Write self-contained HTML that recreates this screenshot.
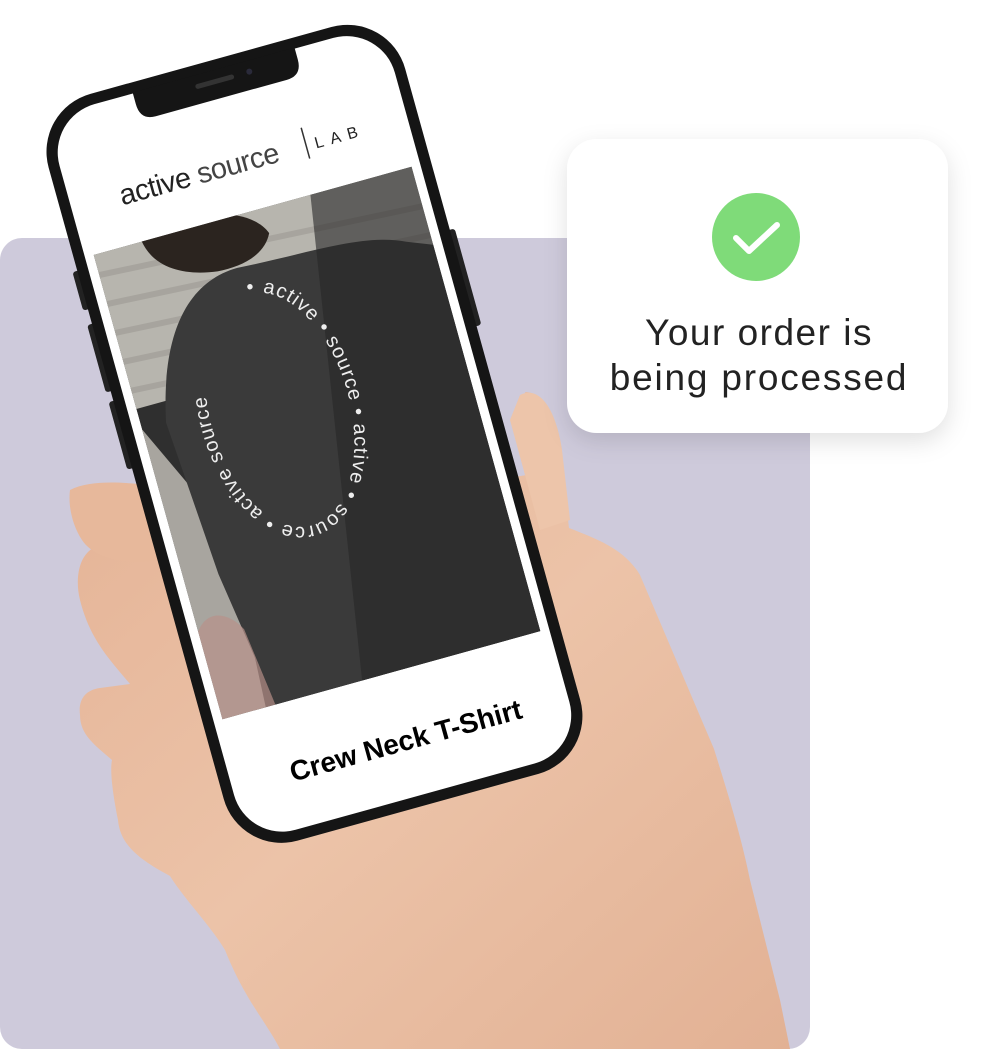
<!DOCTYPE html>
<html><head><meta charset="utf-8"><style>
html,body{margin:0;padding:0;background:#fff;width:991px;height:1049px;overflow:hidden}
svg{display:block}
</style></head><body>
<svg width="991" height="1049" viewBox="0 0 991 1049" xmlns="http://www.w3.org/2000/svg">
<defs>
<linearGradient id="skin" x1="0" y1="0" x2="1" y2="1">
<stop offset="0" stop-color="#e4b295"/><stop offset="0.5" stop-color="#ecc3a8"/><stop offset="1" stop-color="#e2b194"/>
</linearGradient>
<filter id="sh" x="-20%" y="-20%" width="140%" height="150%"><feDropShadow dx="0" dy="8" stdDeviation="12" flood-color="#000" flood-opacity="0.12"/></filter>
<clipPath id="imgclip"><rect x="-165" y="-241" width="330" height="482"/></clipPath>
</defs>
<rect x="0" y="238" width="810" height="811" rx="22" fill="#cecadb"/>
<!-- hand -->
<path d="M525 392 C545 392 556 420 560 450 L569 528 C600 540 625 550 640 575 L714 749 C730 800 742 840 750 880 L780 1000 L790 1049 L280 1049 C265 1020 245 1000 225 950 C210 925 185 900 170 876 C140 860 120 845 118 820 C112 790 110 770 112 760 C95 745 80 735 80 715 C78 700 85 690 100 688 L130 684 C110 660 90 640 80 600 C75 580 78 555 95 547 C110 535 125 532 140 534 L560 470 Z" fill="url(#skin)"/>
<path d="M70 490 C90 480 120 482 150 485 L160 560 C130 565 95 560 82 540 C72 525 68 505 70 490 Z" fill="#e7b89b"/>
<path d="M520 395 C540 385 556 410 562 450 L570 520 L540 530 L510 420 Z" fill="#edc5aa"/>
<!-- phone -->
<g transform="translate(317,443) rotate(-15.5)">
<rect x="-190" y="-230" width="8" height="40" rx="3" fill="#222"/>
<rect x="-190" y="-175" width="8" height="70" rx="3" fill="#222"/>
<rect x="-190" y="-95" width="8" height="70" rx="3" fill="#222"/>
<rect x="182" y="-170" width="8" height="100" rx="3" fill="#222"/>
<rect x="-185" y="-397" width="370" height="775" rx="60" fill="#151515"/>
<rect x="-174" y="-386" width="348" height="753" rx="50" fill="#fff"/>
<path d="M-84 -387 L84 -387 L84 -375 Q84 -358 68 -358 L-68 -358 Q-84 -358 -84 -375 Z" fill="#151515"/>
<rect x="-22" y="-378" width="40" height="5" rx="2.5" fill="#333"/>
<circle cx="34" cy="-376" r="3" fill="#2a2a3a"/>
<text x="-124" y="-281" font-family="Liberation Sans, sans-serif" font-size="29" fill="#222" letter-spacing="-0.5"><tspan>active</tspan><tspan fill="#444"> source</tspan></text>
<line x1="69" y1="-308" x2="69" y2="-276" stroke="#333" stroke-width="1.5"/>
<text x="78" y="-284" font-family="Liberation Sans, sans-serif" font-size="16" fill="#222" letter-spacing="7">LAB</text>
<g clip-path="url(#imgclip)">
<rect x="-165" y="-241" width="330" height="482" fill="#2f2f2f"/>
<rect x="-165" y="-241" width="330" height="160" fill="#b7b5ae"/>
<path d="M-165 -220 L165 -200 M-165 -190 L165 -170 M-165 -160 L165 -140 M-165 -130 L165 -110 M-165 -100 L165 -80" stroke="#9d9a93" stroke-width="6" opacity="0.6"/>
<path d="M-165 -60 L-165 241 L-120 241 L-110 60 Z" fill="#a8a59f"/>
<path d="M-115 -241 C-95 -262 -5 -255 10 -215 C0 -195 -25 -190 -50 -192 C-80 -196 -110 -210 -115 -241 Z" fill="#2b241f"/>
<path d="M-140 -60 C-120 -150 -80 -190 -30 -190 C40 -185 100 -190 140 -170 L165 -160 L165 241 L-110 241 L-130 100 Z" fill="#3a3a3a"/>
<path d="M60 -241 L165 -241 L165 241 L-20 241 Z" fill="#262626" opacity="0.6"/>
<path d="M-165 150 C-150 130 -130 140 -120 160 L-110 241 L-165 241 Z" fill="#b8918a" opacity="0.7"/>
<path id="ring" d="M-27 -162 A70 120 0 1 1 -27 78 A70 120 0 1 1 -27 -162" fill="none"/>
<text font-family="Liberation Sans, sans-serif" font-size="20" fill="#eee" letter-spacing="1.2"><textPath href="#ring">• active • source • active • source • active source</textPath></text>
</g>
<text x="6" y="320" text-anchor="middle" font-family="Liberation Sans, sans-serif" font-weight="bold" font-size="28" fill="#000">Crew Neck T-Shirt</text>
</g>
<!-- card -->
<rect x="567" y="139" width="381" height="294" rx="30" fill="#fff" filter="url(#sh)"/>
<circle cx="756" cy="237" r="44" fill="#7fdb79"/>
<path d="M736 238 L749 251 L777 225" fill="none" stroke="#fff" stroke-width="6" stroke-linecap="round" stroke-linejoin="round"/>
<text x="759" y="345" text-anchor="middle" font-family="Liberation Sans, sans-serif" font-size="37" letter-spacing="1.5" fill="#222">Your order is</text>
<text x="759" y="390" text-anchor="middle" font-family="Liberation Sans, sans-serif" font-size="37" letter-spacing="1.8" fill="#222">being processed</text>
</svg>
</body></html>
